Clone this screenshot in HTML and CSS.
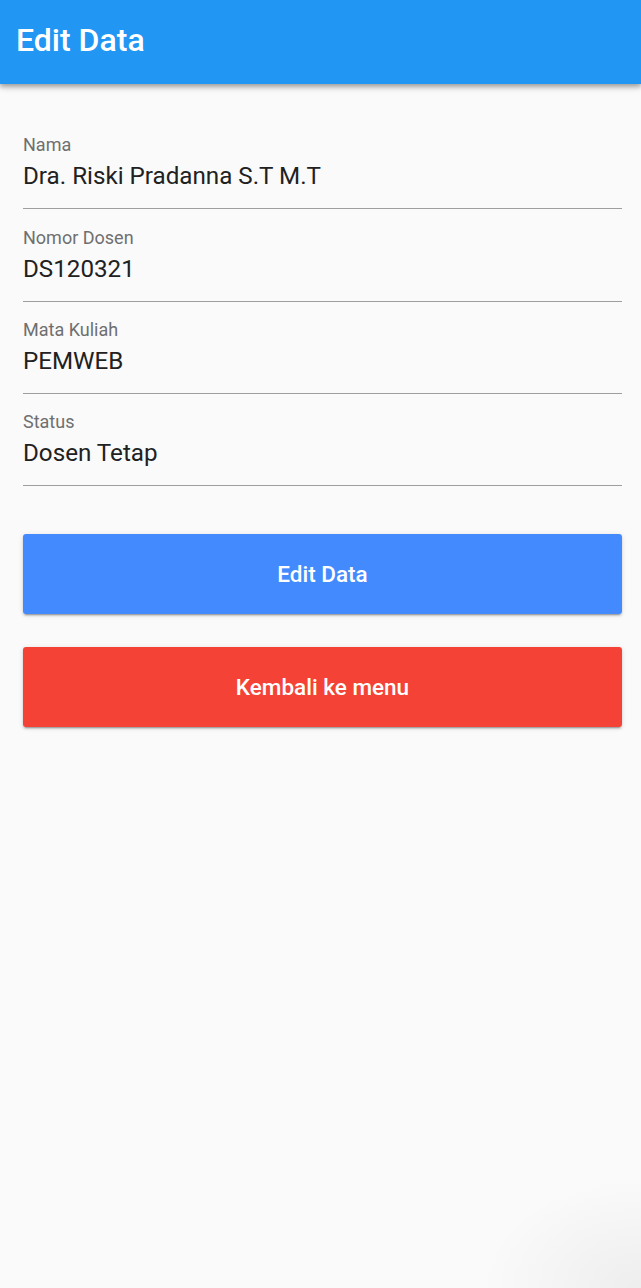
FILE: index.html
```html
<!DOCTYPE html>
<html>
<head>
<meta charset="utf-8">
<link rel="stylesheet" href="styles.css">
</head>
<body>
<header class="appbar"><h1 class="title">Edit Data</h1></header>
<main class="content">
  <div class="field"><div class="label">Nama</div><div class="value">Dra. Riski Pradanna S.T M.T</div></div>
  <div class="field"><div class="label">Nomor Dosen</div><div class="value">DS120321</div></div>
  <div class="field"><div class="label">Mata Kuliah</div><div class="value">PEMWEB</div></div>
  <div class="field"><div class="label">Status</div><div class="value">Dosen Tetap</div></div>
  <div class="buttons">
    <button class="btn btn-blue">Edit Data</button>
    <button class="btn btn-red">Kembali ke menu</button>
  </div>
</main>
<div class="corner-shadow"></div>
</body>
</html>
```
FILE: styles.css
```css
html, body { margin: 0; padding: 0; }
body {
  width: 641px; height: 1288px; overflow: hidden;
  background: #fafafa;
  font-family: Roboto, "Noto Sans", sans-serif;
  position: relative;
}
.appbar {
  height: 84px;
  background: #2196f3;
  display: flex; align-items: center;
  padding: 0 16px;
  box-shadow: 0 2px 4px rgba(0,0,0,0.2), 0 4px 5px rgba(0,0,0,0.14), 0 1px 10px rgba(0,0,0,0.12);
  position: relative; z-index: 1;
}
.title {
  margin: 0; color: #fff; font-weight: 500; font-size: 32px; letter-spacing: 0;
  padding-bottom: 4px;
}
.content {
  padding: 33px 19px 0 23px;
  display: flex; flex-direction: column;
}
.field {
  height: 92.33px; box-sizing: border-box;
  border-bottom: 1.5px solid #9e9e9e;
  display: flex; flex-direction: column; justify-content: flex-end;
  padding-bottom: 17px;
}
.label { font-size: 18px; color: #6f6f6f; line-height: 22px; }
.value { font-size: 24.2px; color: #212121; line-height: 30px; margin-top: 5px; }
.buttons { display: flex; flex-direction: column; gap: 33px; margin-top: 48px; }
.btn {
  height: 80px; border: none; border-radius: 3px;
  color: #fff; font-family: Roboto, sans-serif; font-weight: 500; font-size: 22.5px;
  box-shadow: 0 3px 1px -2px rgba(0,0,0,0.2), 0 2px 2px rgba(0,0,0,0.14), 0 1px 5px rgba(0,0,0,0.12);
}
.btn-blue { background: #448aff; }
.btn-red { background: #f44336; }
.corner-shadow {
  position: absolute; right: 0; bottom: 0; width: 200px; height: 150px;
  background: radial-gradient(ellipse 160px 110px at 100% 100%, rgba(0,0,0,0.05), rgba(0,0,0,0) 100%);
  pointer-events: none;
}
```
